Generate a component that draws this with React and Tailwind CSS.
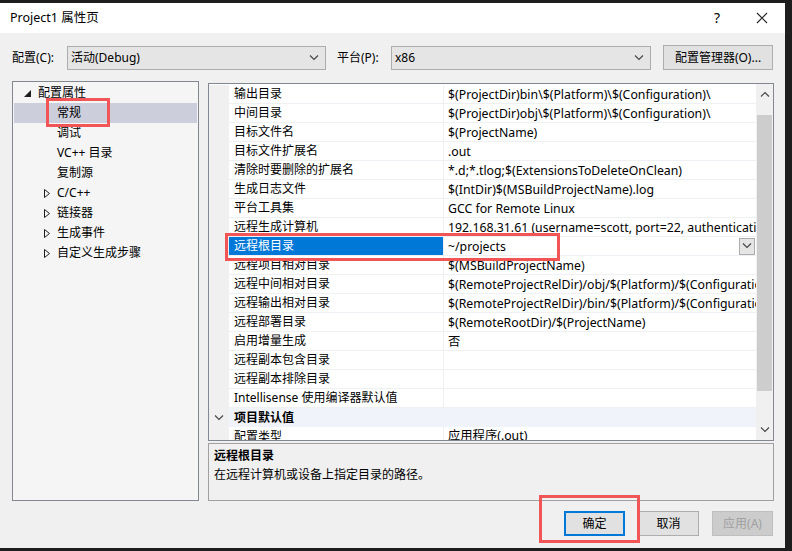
import React from 'react'

const rows = [
  ['输出目录', '$(ProjectDir)bin\\$(Platform)\\$(Configuration)\\'],
  ['中间目录', '$(ProjectDir)obj\\$(Platform)\\$(Configuration)\\'],
  ['目标文件名', '$(ProjectName)'],
  ['目标文件扩展名', '.out'],
  ['清除时要删除的扩展名', '*.d;*.tlog;$(ExtensionsToDeleteOnClean)'],
  ['生成日志文件', '$(IntDir)$(MSBuildProjectName).log'],
  ['平台工具集', 'GCC for Remote Linux'],
  ['远程生成计算机', '192.168.31.61 (username=scott, port=22, authentication=Password)'],
  ['远程根目录', '~/projects', true],
  ['远程项目相对目录', '$(MSBuildProjectName)'],
  ['远程中间相对目录', '$(RemoteProjectRelDir)/obj/$(Platform)/$(Configuration)'],
  ['远程输出相对目录', '$(RemoteProjectRelDir)/bin/$(Platform)/$(Configuration)'],
  ['远程部署目录', '$(RemoteRootDir)/$(ProjectName)'],
  ['启用增量生成', '否'],
  ['远程副本包含目录', ''],
  ['远程副本排除目录', ''],
  ['Intellisense 使用编译器默认值', ''],
]

const tree = [
  { label: '配置属性', level: 0, open: true },
  { label: '常规', level: 1, selected: true },
  { label: '调试', level: 1 },
  { label: 'VC++ 目录', level: 1 },
  { label: '复制源', level: 1 },
  { label: 'C/C++', level: 1, closed: true },
  { label: '链接器', level: 1, closed: true },
  { label: '生成事件', level: 1, closed: true },
  { label: '自定义生成步骤', level: 1, closed: true },
]

function Chevron({ up, className = '' }) {
  return (
    <svg width="10" height="6" viewBox="0 0 10 6" className={className}>
      <path d={up ? 'M1 5.5 L5 1.5 L9 5.5' : 'M1 0.5 L5 4.5 L9 0.5'} fill="none" stroke="#444" strokeWidth="1.1" />
    </svg>
  )
}

function Combo({ value, width }) {
  return (
    <div className={`${width} h-[24px] bg-[#e5e5e5] border border-[#adadad] flex items-center justify-between pl-[3px] pr-[6px]`}>
      <span>{value}</span>
      <Chevron />
    </div>
  )
}

function Button({ children, primary, disabled }) {
  return (
    <div
      className={`w-[61px] h-[25px] flex items-center justify-center border ${
        primary
          ? 'border-2 border-[#0078d7] bg-[#e1e1e1]'
          : disabled
          ? 'border-[#bfbfbf] bg-[#cccccc] text-[#a0a0a0]'
          : 'border-[#adadad] bg-[#e1e1e1]'
      }`}
    >
      {children}
    </div>
  )
}

export default function App() {
  return (
    <div className="relative w-[792px] h-[551px] overflow-hidden bg-[#1e1e1e] text-[12px] text-black font-['Noto_Sans','Noto_Sans_CJK_SC',sans-serif] leading-none">
      <div className="mt-[3px] w-[785px] h-[545px] bg-[#f0f0f0] flex flex-col">
        {/* title bar */}
        <div className="h-[30px] bg-white flex items-center pl-[10px] pr-[17px] shrink-0">
          <span className="text-[12.5px]">Project1 属性页</span>
          <span className="ml-auto text-[14px] mr-[36px]">?</span>
          <svg width="12" height="12" viewBox="0 0 12 12">
            <path d="M1 1 L11 11 M11 1 L1 11" stroke="#222" strokeWidth="1.1" />
          </svg>
        </div>

        {/* config row */}
        <div className="mt-[12px] pl-[12px] flex items-center h-[25px]">
          <span className="w-[55px]">配置(C):</span>
          <Combo value="活动(Debug)" width="w-[259px]" />
          <span className="ml-[11px] w-[54px]">平台(P):</span>
          <Combo value="x86" width="w-[260px]" />
          <div className="ml-[12px] w-[110px] h-[25px] border border-[#adadad] bg-[#e1e1e1] flex items-center justify-center">
            配置管理器(O)...
          </div>
        </div>

        {/* main */}
        <div className="mt-[11px] pl-[12px] flex gap-[9px]">
          {/* tree */}
          <div className="w-[187px] h-[420px] border border-[#828790] bg-[#f5f5f5] pt-[1px] px-[1px]">
            {tree.map((t) => (
              <div
                key={t.label}
                className={`h-[20px] flex items-center ${t.selected ? 'bg-[#cccedb]' : ''} ${t.level ? 'pl-[43px]' : 'pl-[24px]'}`}
              >
                {t.open && (
                  <svg width="7" height="7" viewBox="0 0 7 7" className="-ml-[14px] mr-[7px]">
                    <path d="M7 0 L7 7 L0 7 Z" fill="#1e1e1e" />
                  </svg>
                )}
                {t.closed && (
                  <svg width="6" height="9" viewBox="0 0 6 9" className="-ml-[13px] mr-[7px]">
                    <path d="M0.5 0.5 L5.5 4.5 L0.5 8.5 Z" fill="none" stroke="#1e1e1e" strokeWidth="1" />
                  </svg>
                )}
                <span>{t.label}</span>
              </div>
            ))}
          </div>

          {/* right column */}
          <div className="w-[566px] flex flex-col">
            <div className="mt-[2px] h-[358px] border border-[#828790] bg-white flex overflow-hidden">
              <div className="flex-1 min-w-0 flex flex-col pt-[1px] text-[12.3px]">
                {rows.map(([name, value, sel]) => (
                  <div key={name} className="h-[19px] shrink-0 flex">
                    <div className="w-[20px] shrink-0 bg-[#f0f0f0]" />
                    <div
                      className={`w-[215px] shrink-0 border-b border-r border-[#eef0f3] flex items-center pl-[5px] whitespace-nowrap overflow-hidden ${
                        sel ? 'bg-[#0078d7] text-white' : ''
                      }`}
                    >
                      <span className="text-[12px] leading-[16px]">{name}</span>
                    </div>
                    <div className="flex-1 min-w-0 border-b border-[#eef0f3] flex items-center pl-[4px] whitespace-nowrap overflow-hidden">
                      <span className="flex-1 min-w-0 overflow-hidden leading-[17px]">{value}</span>
                      {sel && (
                        <div className="w-[16px] h-[17px] shrink-0 mr-[1px] border border-[#adadad] bg-[#e5e5e5] flex items-center justify-center">
                          <Chevron />
                        </div>
                      )}
                    </div>
                  </div>
                ))}
                <div className="h-[19px] shrink-0 flex bg-[#f0f3f9]">
                  <div className="w-[20px] shrink-0 bg-[#f0f0f0] flex items-center justify-center">
                    <Chevron />
                  </div>
                  <div className="flex items-center pl-[5px] font-bold text-[12px]">项目默认值</div>
                </div>
                <div className="h-[19px] shrink-0 flex">
                  <div className="w-[20px] shrink-0 bg-[#f0f0f0]" />
                  <div className="w-[215px] shrink-0 border-r border-[#eef0f3] flex items-center pl-[5px] text-[12px]">配置类型</div>
                  <div className="flex-1 flex items-center pl-[4px]">应用程序(.out)</div>
                </div>
              </div>
              {/* scrollbar */}
              <div className="w-[17px] shrink-0 bg-[#f0f0f0] flex flex-col items-center">
                <div className="h-[20px] flex items-center">
                  <Chevron up />
                </div>
                <div className="mt-[11px] w-[15px] h-[276px] bg-[#cdcdcd]" />
                <div className="mt-auto h-[20px] flex items-center">
                  <Chevron />
                </div>
              </div>
            </div>

            {/* description */}
            <div className="mt-[2px] h-[58px] border border-[#a0a0a0] px-[5px] pt-[6px] flex flex-col gap-[7px]">
              <span className="font-bold">远程根目录</span>
              <span>在远程计算机或设备上指定目录的路径。</span>
            </div>
          </div>
        </div>

        {/* buttons */}
        <div className="mt-[10px] pr-[12px] flex justify-end gap-[13px]">
          <Button primary>确定</Button>
          <Button>取消</Button>
          <Button disabled>应用(A)</Button>
        </div>
      </div>

      {/* red highlight boxes */}
      <div className="absolute left-[46px] top-[98px] w-[64px] h-[29px] border-[3px] border-[#f25555]" />
      <div className="absolute left-[225px] top-[233px] w-[335px] h-[28px] border-[3px] border-[#f25555]" />
      <div className="absolute left-[539px] top-[495px] w-[101px] h-[48px] border-[3px] border-[#f25555]" />
    </div>
  )
}
